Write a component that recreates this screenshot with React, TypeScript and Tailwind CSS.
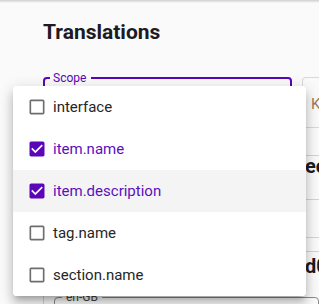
import React from "react";

const PURPLE = "#5a06b8";

function CheckIcon({ checked }: { checked: boolean }) {
  return (
    <svg width="20" height="20" viewBox="0 0 24 24" className="shrink-0">
      {checked ? (
        <path
          fill={PURPLE}
          d="M19 3H5c-1.11 0-2 .9-2 2v14c0 1.1.89 2 2 2h14c1.11 0 2-.9 2-2V5c0-1.1-.89-2-2-2zm-9 14l-5-5 1.41-1.41L10 14.17l7.59-7.59L19 8l-9 9z"
        />
      ) : (
        <path
          fill="#6e6e6e"
          d="M19 5v14H5V5h14m0-2H5c-1.1 0-2 .9-2 2v14c0 1.1.9 2 2 2h14c1.1 0 2-.9 2-2V5c0-1.1-.9-2-2-2z"
        />
      )}
    </svg>
  );
}

const items = [
  { label: "interface", checked: false, hover: false },
  { label: "item.name", checked: true, hover: false },
  { label: "item.description", checked: true, hover: true },
  { label: "tag.name", checked: false, hover: false },
  { label: "section.name", checked: false, hover: false },
];

export default function App() {
  return (
    <div className="relative w-[319px] h-[304px] overflow-hidden bg-[#fafafa] font-['Roboto',sans-serif]">
      <div className="h-[3px] bg-gradient-to-b from-[#cfcfcf] to-[#fafafa]" />
      <div className="pl-[43px]">
        <h1 className="mt-[15px] text-[21px] leading-[28px] font-bold text-[#1c1a24]">
          Translations
        </h1>
        <div className="mt-[31px] flex gap-[10px]">
          <div className="relative w-[249px] h-[51px] shrink-0 rounded-[4px] border-2 border-[#5a06b8]">
            <span className="absolute left-[5px] -top-[9px] bg-[#fafafa] pl-[3px] pr-[5px] text-[12px] leading-[16px] text-[#5a06b8]">
              Scope
            </span>
          </div>
          <div className="flex-1 h-[51px] rounded-tl-[4px] border border-r-0 border-[#d9d9d9] pl-[8px] pt-[16px] text-[15px] leading-[20px] text-[#9d7a5f] whitespace-nowrap">
            Keys
          </div>
        </div>
        <div className="h-[28px] border-b border-[#d4d4d4]" />
        <div className="h-[44px] border-b border-[#d4d4d4] pl-[262px] text-[20px] leading-[20px] font-bold text-[#1c1a24] whitespace-nowrap">
          ec
        </div>
        <div className="h-[38px] border-b border-[#d4d4d4]" />
        <div className="h-[14px] border-b border-[#d4d4d4]" />
        <div className="pl-[262px] text-[20px] leading-[28px] font-bold text-[#1c1a24] whitespace-nowrap">
          d0
        </div>
        <div className="border-l border-[#d4d4d4] pl-[10px] pt-[17px]">
          <div className="relative h-[40px] rounded-[4px] border border-[#8a8a8a]">
            <span className="absolute left-[7px] -top-[9px] bg-[#fafafa] px-[4px] text-[12px] leading-[16px] text-[#444]">
              en-GB
            </span>
          </div>
        </div>
      </div>

      <div className="absolute left-[13px] top-[86px] w-[293px] rounded-[4px] bg-white shadow-[0_5px_5px_-3px_rgba(0,0,0,0.2),0_8px_10px_1px_rgba(0,0,0,0.14),0_3px_14px_2px_rgba(0,0,0,0.12)] overflow-hidden">
        {items.map((it) => (
          <div
            key={it.label}
            className={
              "flex h-[42px] items-center pl-[14px] " +
              (it.hover ? "bg-[#f4f4f4]" : "bg-white")
            }
          >
            <CheckIcon checked={it.checked} />
            <span
              className={
                "ml-[6px] text-[15px] leading-[20px] " +
                (it.checked ? "text-[#5a10bd]" : "text-[#262626]")
              }
            >
              {it.label}
            </span>
          </div>
        ))}
      </div>
    </div>
  );
}
